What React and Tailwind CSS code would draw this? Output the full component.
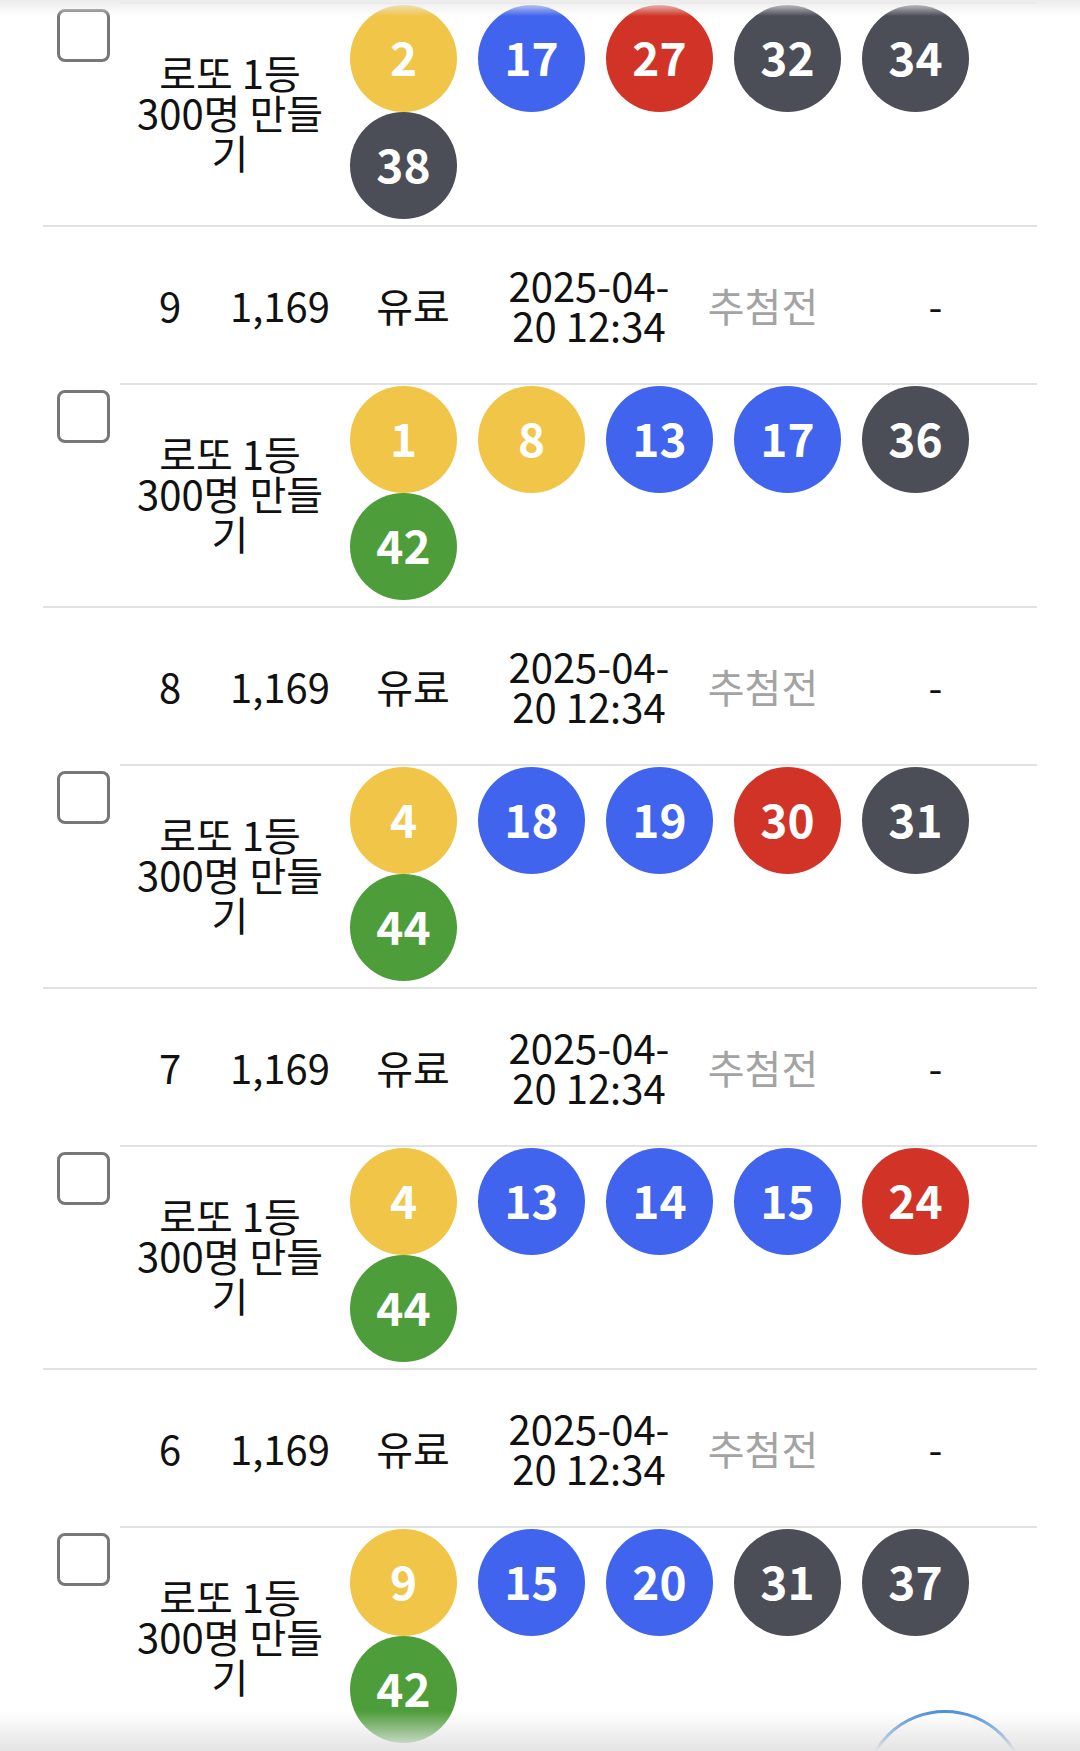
import React from 'react'

const records = [
  { no: 10, balls: [2, 17, 27, 32, 34, 38] },
  { no: 9, balls: [1, 8, 13, 17, 36, 42] },
  { no: 8, balls: [4, 18, 19, 30, 31, 44] },
  { no: 7, balls: [4, 13, 14, 15, 24, 44] },
  { no: 6, balls: [9, 15, 20, 31, 37, 42] },
]

// lotto ball colour by number range
const ballColor = (n) => {
  if (n <= 10) return 'bg-[#f1c547]'
  if (n <= 20) return 'bg-[#4064ee]'
  if (n <= 30) return 'bg-[#d13426]'
  if (n <= 40) return 'bg-[#4c4e57]'
  return 'bg-[#4d9e3a]'
}

const Ball = ({ n }) => (
  <div className={`w-[107px] h-[107px] rounded-full flex items-center justify-center text-white font-bold text-[46px] leading-none ${ballColor(n)}`}>
    <span className="pb-[6px]">{n}</span>
  </div>
)

const Record = ({ no, balls }) => (
  <div className="flex border-b-2 border-[#e2e2e2]">
    {/* checkbox spans both rows */}
    <div className="w-[77px] flex items-center justify-center pl-[4px]">
      <input
        type="checkbox"
        className="appearance-none w-[53px] h-[53px] border-[3px] border-[#777777] rounded-[8px] bg-white"
      />
    </div>
    <div className="flex-1">
      <div className="grid grid-cols-[100px_120px_146px_206px_142px_1fr] items-center text-center border-b-2 border-[#e2e2e2] py-[38px]">
        <div>{no}</div>
        <div>1,169</div>
        <div>유료</div>
        <div>
          2025-04-
          <br />
          20 12:34
        </div>
        <div className="text-[#a3a3a3]">추첨전</div>
        <div>-</div>
      </div>
      <div className="flex items-center pt-[1px] pb-[6px]">
        <div className="w-[220px] text-center">
          로또 1등
          <br />
          300명 만들
          <br />
          기
        </div>
        <div className="flex-1 flex flex-wrap gap-x-[21px] pl-[10px]">
          {balls.map((b, i) => (
            <Ball key={i} n={b} />
          ))}
        </div>
      </div>
    </div>
  </div>
)

const App = () => {
  return (
    <div
      className="relative h-[1751px] overflow-hidden bg-white text-[#111] text-[40px] leading-[40px]"
      style={{ fontFamily: '"Noto Sans CJK KR", "Noto Sans", sans-serif' }}
    >
      <div className="px-[43px] -mt-[154px]">
        {records.map((r) => (
          <Record key={r.no} no={r.no} balls={r.balls} />
        ))}
      </div>

      {/* header shadow */}
      <div className="absolute inset-x-0 top-0 h-[16px] bg-linear-to-b from-[#ececec] to-transparent pointer-events-none" />

      {/* floating button */}
      <div className="absolute right-[53px] -bottom-[123px] w-[164px] h-[164px] rounded-full bg-white border-[3px] border-[#4a90da]" />

      {/* bottom shadow */}
      <div className="absolute inset-x-0 bottom-0 h-[40px] bg-linear-to-b from-transparent to-[#e4e4e4] pointer-events-none" />
    </div>
  )
}

export default App
